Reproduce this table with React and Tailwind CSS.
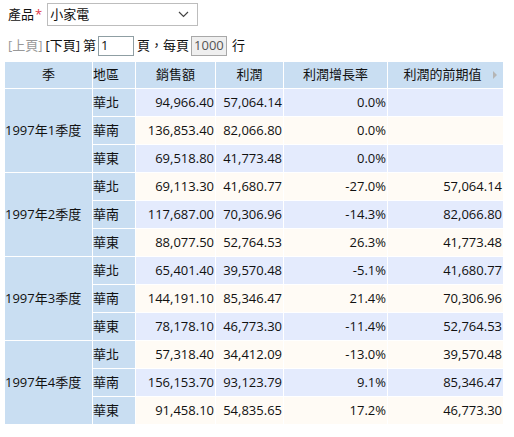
import React from 'react';

const groups = [
  {
    q: '1997年1季度',
    rows: [
      ['華北', '94,966.40', '57,064.14', '0.0%', ''],
      ['華南', '136,853.40', '82,066.80', '0.0%', ''],
      ['華東', '69,518.80', '41,773.48', '0.0%', ''],
    ],
  },
  {
    q: '1997年2季度',
    rows: [
      ['華北', '69,113.30', '41,680.77', '-27.0%', '57,064.14'],
      ['華南', '117,687.00', '70,306.96', '-14.3%', '82,066.80'],
      ['華東', '88,077.50', '52,764.53', '26.3%', '41,773.48'],
    ],
  },
  {
    q: '1997年3季度',
    rows: [
      ['華北', '65,401.40', '39,570.48', '-5.1%', '41,680.77'],
      ['華南', '144,191.10', '85,346.47', '21.4%', '70,306.96'],
      ['華東', '78,178.10', '46,773.30', '-11.4%', '52,764.53'],
    ],
  },
  {
    q: '1997年4季度',
    rows: [
      ['華北', '57,318.40', '34,412.09', '-13.0%', '39,570.48'],
      ['華南', '156,153.70', '93,123.79', '9.1%', '85,346.47'],
      ['華東', '91,458.10', '54,835.65', '17.2%', '46,773.30'],
    ],
  },
];

function App() {
  const cells = [];
  groups.forEach((g, gi) => {
    g.rows.forEach((r, ri) => {
      const idx = gi * 3 + ri;
      const bg = idx % 2 === 0 ? 'bg-[#e4ebfd]' : 'bg-[#fffbf5]';
      if (ri === 0) {
        cells.push(
          <div key={'q' + gi} className="row-span-3 bg-[#c9def2] flex items-center">
            {g.q}
          </div>
        );
      }
      cells.push(
        <div key={'a' + idx} className="bg-[#c9def2] flex items-center">{r[0]}</div>
      );
      for (let c = 1; c < 5; c++) {
        cells.push(
          <div key={'c' + idx + '-' + c} className={bg + ' flex items-center justify-end pr-px'}>
            {r[c]}
          </div>
        );
      }
    });
  });

  return (
    <div className="w-[514px] h-[437px] bg-white text-[13px] text-[#111]" style={{ fontFamily: '"Open Sans", "Noto Sans CJK TC", sans-serif' }}>
      <div className="flex items-center h-[28px] pl-[8px] pt-[1px]">
        <span>產品</span>
        <span className="text-[#e0384a] ml-px mr-[5px]">*</span>
        <div className="w-[151px] h-[23px] border border-[#bdbdbd] flex items-center justify-between pl-[2px] pr-[8px]">
          <span>小家電</span>
          <svg width="11" height="7" viewBox="0 0 11 7">
            <path d="M1 1 L5.5 5.5 L10 1" fill="none" stroke="#444" strokeWidth="1.2" />
          </svg>
        </div>
      </div>
      <div className="flex items-center h-[24px] mt-[6px] pl-[8px]">
        <span className="text-[#999]">[上頁]</span>
        <span className="ml-[3px]">[下頁]</span>
        <span className="ml-[3px]">第</span>
        <div className="w-[36px] h-[20px] border border-[#8f9ea3] ml-[2px] flex items-center pl-[2px]">1</div>
        <span className="ml-[3px]">頁，每頁</span>
        <div className="w-[36px] h-[20px] border border-[#a8a8a8] bg-[#efefef] ml-[2px] flex items-center pl-[2px] text-[#555]">1000</div>
        <span className="ml-[5px]">行</span>
      </div>
      <div className="ml-[5px] mt-[4px] grid grid-cols-[87px_42px_79px_67px_103px_115px] grid-rows-[26px] auto-rows-[27px] gap-px w-[498px]">
        <div className="bg-[#c9def2] flex items-center justify-center">季</div>
        <div className="bg-[#c9def2] flex items-center">地區</div>
        <div className="bg-[#c9def2] flex items-center justify-center">銷售額</div>
        <div className="bg-[#c9def2] flex items-center justify-center">利潤</div>
        <div className="bg-[#c9def2] flex items-center justify-center">利潤增長率</div>
        <div className="bg-[#c9def2] flex items-start justify-center pt-[3px] pr-[6px] relative">
          利潤的前期值
          <span className="absolute right-[6px] top-[9px] w-0 h-0 border-y-[4px] border-y-transparent border-l-[4px] border-l-[#b5b5b5]"></span>
        </div>
        {cells}
      </div>
    </div>
  );
}

export default App;
